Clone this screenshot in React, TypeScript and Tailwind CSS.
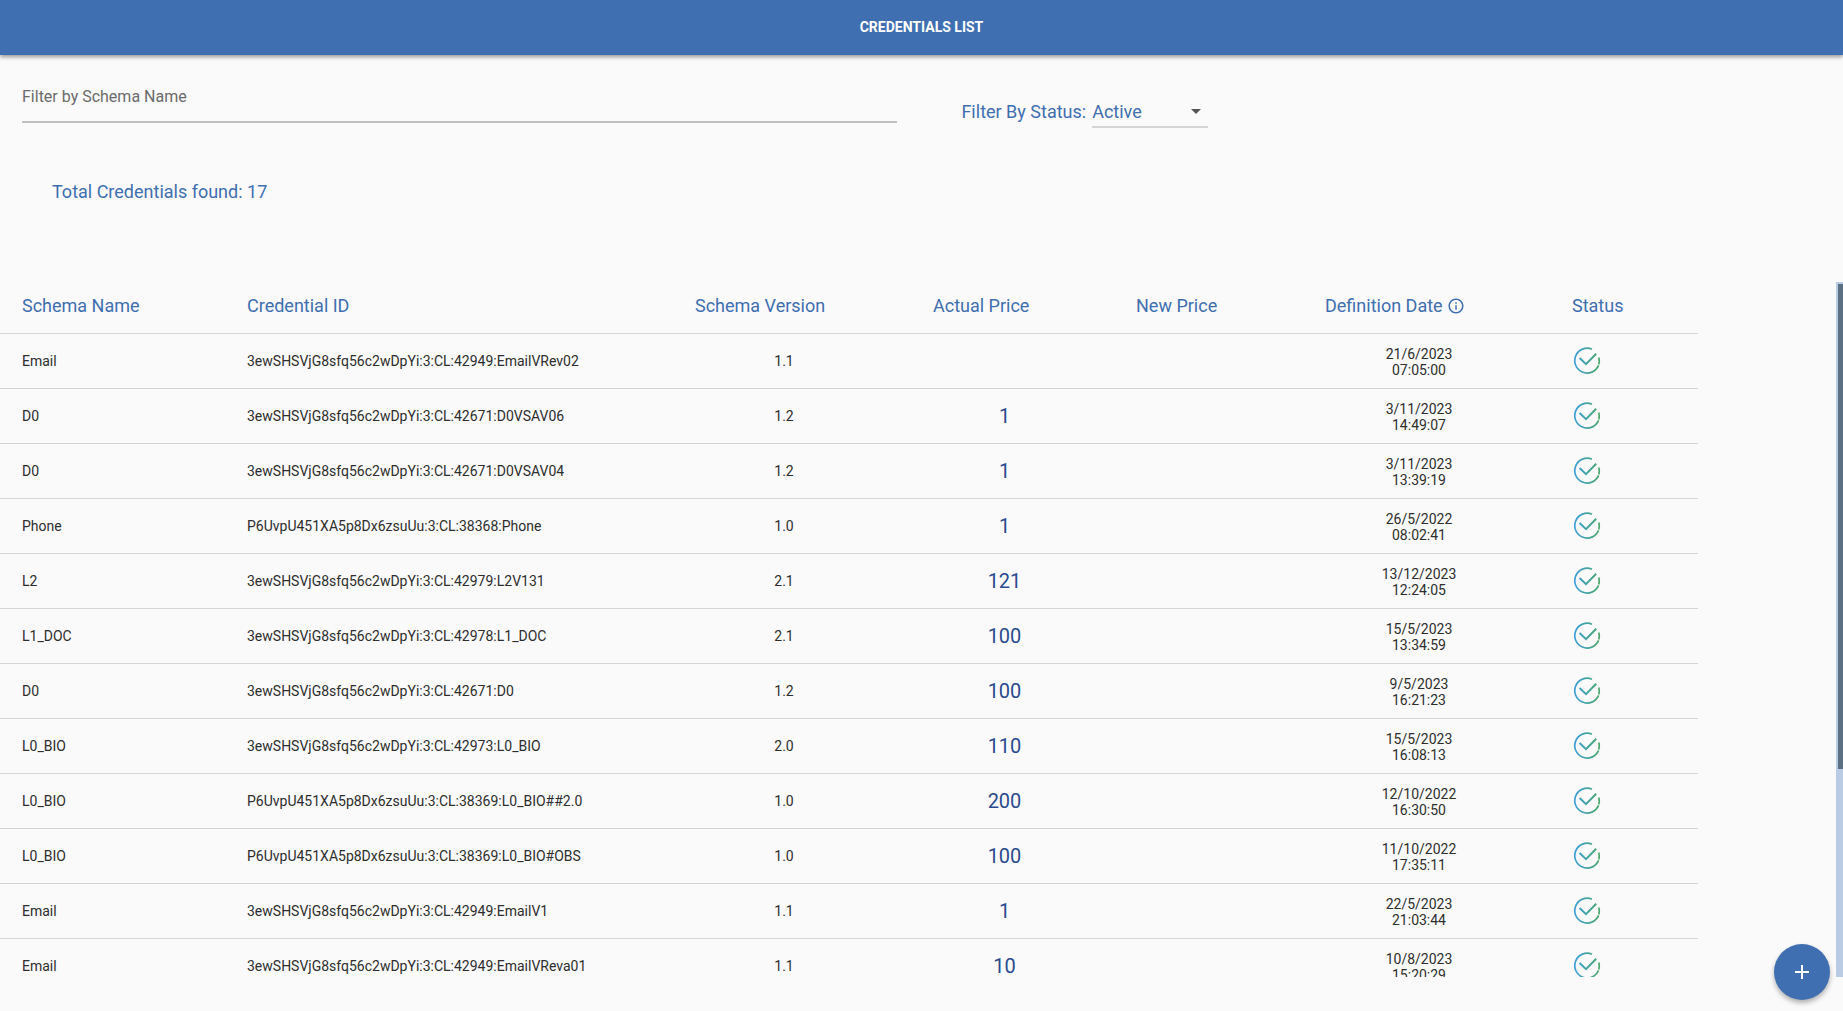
import { useState } from "react";

interface Credential {
  name: string; id: string; version: string;
  price: string; date: string; time: string;
}

const CREDENTIALS: Credential[] = [
  { name: "Email",  id: "3ewSHSVjG8sfq56c2wDpYi:3:CL:42949:EmailVRev02",  version: "1.1", price: "",    date: "21/6/2023",  time: "07:05:00" },
  { name: "D0",     id: "3ewSHSVjG8sfq56c2wDpYi:3:CL:42671:D0VSAV06",     version: "1.2", price: "1",   date: "3/11/2023",  time: "14:49:07" },
  { name: "D0",     id: "3ewSHSVjG8sfq56c2wDpYi:3:CL:42671:D0VSAV04",     version: "1.2", price: "1",   date: "3/11/2023",  time: "13:39:19" },
  { name: "Phone",  id: "P6UvpU451XA5p8Dx6zsuUu:3:CL:38368:Phone",        version: "1.0", price: "1",   date: "26/5/2022",  time: "08:02:41" },
  { name: "L2",     id: "3ewSHSVjG8sfq56c2wDpYi:3:CL:42979:L2V131",       version: "2.1", price: "121", date: "13/12/2023", time: "12:24:05" },
  { name: "L1_DOC", id: "3ewSHSVjG8sfq56c2wDpYi:3:CL:42978:L1_DOC",       version: "2.1", price: "100", date: "15/5/2023",  time: "13:34:59" },
  { name: "D0",     id: "3ewSHSVjG8sfq56c2wDpYi:3:CL:42671:D0",           version: "1.2", price: "100", date: "9/5/2023",   time: "16:21:23" },
  { name: "L0_BIO", id: "3ewSHSVjG8sfq56c2wDpYi:3:CL:42973:L0_BIO",       version: "2.0", price: "110", date: "15/5/2023",  time: "16:08:13" },
  { name: "L0_BIO", id: "P6UvpU451XA5p8Dx6zsuUu:3:CL:38369:L0_BIO##2.0",  version: "1.0", price: "200", date: "12/10/2022", time: "16:30:50" },
  { name: "L0_BIO", id: "P6UvpU451XA5p8Dx6zsuUu:3:CL:38369:L0_BIO#OBS",   version: "1.0", price: "100", date: "11/10/2022", time: "17:35:11" },
  { name: "Email",  id: "3ewSHSVjG8sfq56c2wDpYi:3:CL:42949:EmailV1",      version: "1.1", price: "1",   date: "22/5/2023",  time: "21:03:44" },
  { name: "Email",  id: "3ewSHSVjG8sfq56c2wDpYi:3:CL:42949:EmailVReva01", version: "1.1", price: "10",  date: "10/8/2023",  time: "15:20:29" },
];

function ActiveIcon() {
  return (
    <svg viewBox="0 0 28 28" className="block size-7" fill="none" stroke="url(#activeGradient)" strokeWidth="1.7" role="img" aria-label="Active">
      <path d="M19 2.2A12.4 12.4 0 1 0 25.6 18.4" />
      <path d="M25.8 17.4A12.4 12.4 0 0 0 25.8 10.6" />
      <path d="M6.6 11L13 17.2L23.2 6.8" strokeWidth="2" />
    </svg>
  );
}

function InfoIcon() {
  return (
    <svg viewBox="0 0 24 24" className="size-[18px]" fill="currentColor" aria-hidden="true">
      <path d="M11 7h2v2h-2zm0 4h2v6h-2zm1-9C6.48 2 2 6.48 2 12s4.48 10 10 10 10-4.48 10-10S17.52 2 12 2zm0 18c-4.41 0-8-3.59-8-8s3.59-8 8-8 8 3.59 8 8-3.59 8-8 8z" />
    </svg>
  );
}

export default function App() {
  const [filter, setFilter] = useState("");
  const [status, setStatus] = useState("Active");

  const rows = CREDENTIALS.filter(c => c.name.toLowerCase().includes(filter.toLowerCase()));

  return (
    <div className="flex h-screen flex-col bg-[#fafafa] pb-[34px] font-['Roboto',sans-serif] text-[#3f6fb0]">
      {/* shared by every status icon */}
      <svg className="absolute size-0" aria-hidden="true">
        <defs>
          <linearGradient id="activeGradient" gradientUnits="userSpaceOnUse" x1="1" y1="0" x2="27" y2="0">
            <stop offset="0" stopColor="#3f9fdb" />
            <stop offset="1" stopColor="#4aa869" />
          </linearGradient>
        </defs>
      </svg>

      <header className="flex h-[55px] shrink-0 items-center justify-center bg-[#3f6fb0] pb-0.5 shadow-[0_2px_4px_rgba(0,0,0,0.4)]">
        <h1 className="text-sm font-bold text-white">CREDENTIALS LIST</h1>
      </header>

      <div className="flex shrink-0 pt-[27px]">
        <div className="ml-[22px] w-[47.5%]">
          <input value={filter} onChange={e => setFilter(e.target.value)}
            aria-label="Filter by Schema Name" placeholder="Filter by Schema Name"
            className="h-[41px] w-full border-b-2 border-[#c0c0c0] pb-2.5 text-base text-[#333] outline-none placeholder:text-[#6b6b6b]" />
        </div>
        <div className="ml-16 flex items-start gap-1.5 pt-3 text-lg">
          <label htmlFor="status" className="leading-9">Filter By Status:</label>
          <div className="relative">
            <select id="status" value={status} onChange={e => setStatus(e.target.value)}
              className="h-[34px] w-[116px] appearance-none border-b-2 border-[#d5d5d5] pt-1 outline-none">
              <option>Active</option>
              <option>Revoked</option>
            </select>
            <svg viewBox="0 0 10 5" className="pointer-events-none absolute right-[7px] top-[15px] h-[5px] w-2.5" fill="#555">
              <path d="M0 0h10L5 5z" />
            </svg>
          </div>
        </div>
      </div>

      <p className="shrink-0 pb-[76px] pl-[52px] pt-12 text-lg">Total Credentials found: 17</p>

      <div className="flex min-h-0 flex-1">
        <div className="flex-1 overflow-y-auto pr-[138px] [scrollbar-width:none]">
          <table className="w-full table-fixed border-separate border-spacing-0">
            <colgroup>
              <col className="w-[247px]" />
              <col />
              <col className="w-[178px]" />
              <col className="w-[263px]" />
              <col className="w-[130px]" />
              <col className="w-[306px]" />
              <col className="w-[126px]" />
            </colgroup>
            <thead>
              <tr className="h-[52px] text-left text-lg *:border-b *:border-[#d6d6d6] *:p-0 *:pb-1 *:font-normal">
                <th><span className="pl-[22px]">Schema Name</span></th>
                <th>Credential ID</th>
                <th>Schema Version</th>
                <th><span className="pl-[60px]">Actual Price</span></th>
                <th>New Price</th>
                <th>
                  <span className="flex items-center gap-1 pl-[59px]">Definition Date <InfoIcon /></span>
                </th>
                <th>Status</th>
              </tr>
            </thead>
            <tbody>
              {rows.map(c => (
                <tr key={c.id} className="h-[55px] text-sm text-[#2e2e2e] *:border-b *:border-[#d6d6d6] *:p-0">
                  <td><span className="pl-[22px]">{c.name}</span></td>
                  <td>{c.id}</td>
                  <td className="text-center">{c.version}</td>
                  <td className="text-center text-xl text-[#2a4b8f]">{c.price}</td>
                  <td></td>
                  <td className="text-center leading-4"><div className="pt-0.5">{c.date}<br />{c.time}</div></td>
                  <td><span className="flex pl-px"><ActiveIcon /></span></td>
                </tr>
              ))}
            </tbody>
          </table>
        </div>
        {/* scroll track */}
        <div className="w-[7px] bg-[#b9cce4] pl-0.5 pt-0.5">
          <div className="h-[70%] bg-[#5b7083]" />
        </div>
      </div>

      <button aria-label="Add credential"
        className="fixed bottom-[11px] right-[13px] flex size-14 items-center justify-center rounded-full bg-[#3f6fb0] text-white shadow-[0_3px_5px_rgba(0,0,0,0.3)]">
        <svg viewBox="0 0 24 24" className="size-6" fill="currentColor">
          <path d="M19 13h-6v6h-2v-6H5v-2h6V5h2v6h6v2z" />
        </svg>
      </button>
    </div>
  );
}
